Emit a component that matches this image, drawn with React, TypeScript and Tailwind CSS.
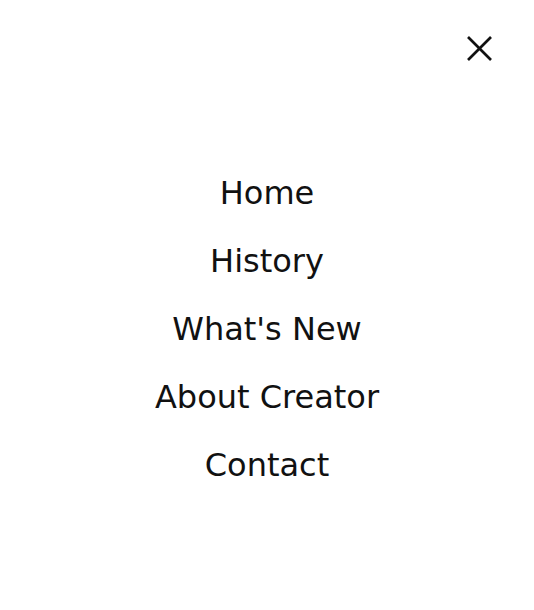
const links = ['Home', 'History', "What's New", 'About Creator', 'Contact'];

export default function App() {
  return (
    <div className="relative h-[610px] w-full bg-white text-[#111]" style={{ fontFamily: '"DejaVu Sans", sans-serif' }}>
      {/* close button */}
      <button className="absolute left-[461px] top-[30px] p-[6px] bg-transparent border-none cursor-pointer" aria-label="Close menu">
        <svg width="25" height="25" viewBox="0 0 25 25" fill="none" stroke="#111" strokeWidth="2.6" strokeLinecap="butt">
          <path d="M1 1L24 24" />
          <path d="M24 1L1 24" />
        </svg>
      </button>

      <nav className="flex flex-col items-center pt-[159px]">
        {links.map(l => (
          <a key={l} href="#" className="block h-[68px] leading-[68px] text-[32px] font-normal text-[#111] no-underline">
            {l}
          </a>
        ))}
      </nav>
    </div>
  );
}
